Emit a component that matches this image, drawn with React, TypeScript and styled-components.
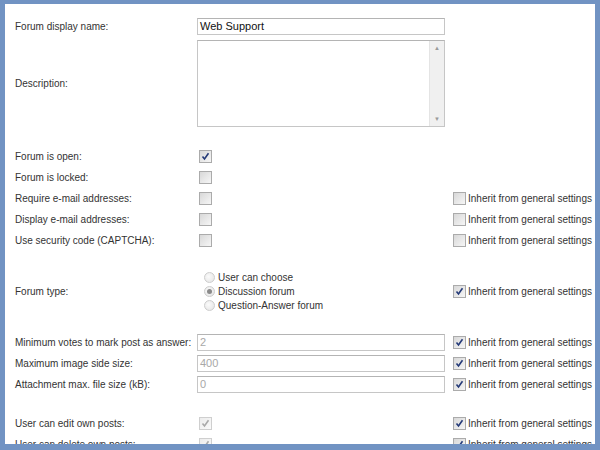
import React from 'react'
import styled, { createGlobalStyle } from 'styled-components'

const GlobalStyle = createGlobalStyle`
  html, body {
    margin: 0;
    padding: 0;
    background: #7193c3;
  }
  body {
    font-family: "Liberation Sans", Arial, sans-serif;
  }
`

const Frame = styled.div`
  width: 600px;
  height: 450px;
  box-sizing: border-box;
  padding: 4px 5px 6px 5px;
  background: #7193c3;
`

const Panel = styled.div`
  height: 100%;
  background: #fff;
  overflow: hidden;
  padding: 12px 0 0 10px;
  box-sizing: border-box;
  display: flex;
  flex-direction: column;
`

const Row = styled.div<{ $pad?: number }>`
  display: grid;
  grid-template-columns: 182px 248px auto;
  align-items: center;
  min-height: 21px;
  padding: ${p => p.$pad || 0}px 0;
  flex-shrink: 0;
`

const Spacer = styled.div<{ $h: number }>`
  height: ${p => p.$h}px;
  flex-shrink: 0;
`

const Label = styled.div`
  font-size: 10px;
  color: #333;
  white-space: nowrap;
`

const TextInput = styled.div<{ $disabled?: boolean }>`
  height: 17px;
  box-sizing: border-box;
  border: 1px solid #c6c6c6;
  border-top-color: #b4b4b4;
  padding: 0 2px;
  font-size: 11px;
  line-height: 15px;
  color: ${p => (p.$disabled ? '#a8a8a8' : '#111')};
  background: #fff;
`

const TextArea = styled.div`
  height: 87px;
  box-sizing: border-box;
  border: 1px solid #c6c6c6;
  border-top-color: #b4b4b4;
  display: flex;
  justify-content: flex-end;
  background: #fff;
`

const ScrollTrack = styled.div`
  width: 14px;
  background: #f0f0f0;
  border-left: 1px solid #e4e4e4;
  display: flex;
  flex-direction: column;
  justify-content: space-between;
  align-items: center;
  padding: 4px 0;
  font-size: 6px;
  color: #9a9a9a;
  line-height: 6px;
`

const Box = styled.span<{ $disabled?: boolean }>`
  display: inline-flex;
  align-items: center;
  justify-content: center;
  width: 13px;
  height: 13px;
  box-sizing: border-box;
  border: 1px solid ${p => (p.$disabled ? '#cfcfcf' : '#ababab')};
  background: ${p =>
    p.$disabled
      ? 'linear-gradient(135deg, #ececec, #fafafa)'
      : 'linear-gradient(135deg, #d8d8d8, #f6f6f6)'};
  flex-shrink: 0;
`

const CheckCell = styled.div`
  display: flex;
  align-items: center;
  padding-left: 2px;
`

const Inherit = styled.div`
  display: flex;
  align-items: center;
  gap: 2px;
  margin-left: 8px;
  font-size: 10px;
  color: #333;
  white-space: nowrap;
`

const RadioList = styled.div`
  display: flex;
  flex-direction: column;
  padding-left: 7px;
`

const RadioItem = styled.div`
  display: flex;
  align-items: center;
  gap: 3px;
  height: 14px;
  font-size: 10px;
  color: #333;
`

const RadioDot = styled.span<{ $on?: boolean }>`
  width: 11px;
  height: 11px;
  box-sizing: border-box;
  border-radius: 50%;
  border: 1px solid #cdcdcd;
  background: radial-gradient(circle at 40% 40%, #fbfbfb, #e2e2e2);
  display: inline-flex;
  align-items: center;
  justify-content: center;
  &::after {
    content: '';
    display: ${p => (p.$on ? 'block' : 'none')};
    width: 5px;
    height: 5px;
    border-radius: 50%;
    background: #8a8a8a;
  }
`

const Check = ({ checked, disabled }: { checked?: boolean; disabled?: boolean }) => (
  <Box $disabled={disabled}>
    {checked && (
      <svg width="9" height="9" viewBox="0 0 9 9">
        <path
          d="M1.5 4.5 L3.5 7 L7.5 1.2"
          fill="none"
          stroke={disabled ? '#a9a9a9' : '#243a78'}
          strokeWidth="1.6"
        />
      </svg>
    )}
  </Box>
)

const InheritBox = ({ checked }: { checked?: boolean }) => (
  <Inherit>
    <Check checked={checked} />
    Inherit from general settings
  </Inherit>
)

export default function App() {
  return (
    <Frame>
      <GlobalStyle />
      <Panel>
        <Row>
          <Label>Forum display name:</Label>
          <TextInput>Web Support</TextInput>
        </Row>
        <Row $pad={3}>
          <Label>Description:</Label>
          <TextArea>
            <ScrollTrack>
              <span>▲</span>
              <span>▼</span>
            </ScrollTrack>
          </TextArea>
        </Row>
        <Spacer $h={16} />
        <Row>
          <Label>Forum is open:</Label>
          <CheckCell><Check checked /></CheckCell>
        </Row>
        <Row>
          <Label>Forum is locked:</Label>
          <CheckCell><Check /></CheckCell>
        </Row>
        <Row>
          <Label>Require e-mail addresses:</Label>
          <CheckCell><Check /></CheckCell>
          <InheritBox />
        </Row>
        <Row>
          <Label>Display e-mail addresses:</Label>
          <CheckCell><Check /></CheckCell>
          <InheritBox />
        </Row>
        <Row>
          <Label>Use security code (CAPTCHA):</Label>
          <CheckCell><Check /></CheckCell>
          <InheritBox />
        </Row>
        <Spacer $h={19} />
        <Row>
          <Label>Forum type:</Label>
          <RadioList>
            <RadioItem><RadioDot />User can choose</RadioItem>
            <RadioItem><RadioDot $on />Discussion forum</RadioItem>
            <RadioItem><RadioDot />Question-Answer forum</RadioItem>
          </RadioList>
          <InheritBox checked />
        </Row>
        <Spacer $h={20} />
        <Row>
          <Label>Minimum votes to mark post as answer:</Label>
          <TextInput $disabled>2</TextInput>
          <InheritBox checked />
        </Row>
        <Row>
          <Label>Maximum image side size:</Label>
          <TextInput $disabled>400</TextInput>
          <InheritBox checked />
        </Row>
        <Row>
          <Label>Attachment max. file size (kB):</Label>
          <TextInput $disabled>0</TextInput>
          <InheritBox checked />
        </Row>
        <Spacer $h={18} />
        <Row>
          <Label>User can edit own posts:</Label>
          <CheckCell><Check checked disabled /></CheckCell>
          <InheritBox checked />
        </Row>
        <Row>
          <Label>User can delete own posts:</Label>
          <CheckCell><Check checked disabled /></CheckCell>
          <InheritBox checked />
        </Row>
      </Panel>
    </Frame>
  )
}
